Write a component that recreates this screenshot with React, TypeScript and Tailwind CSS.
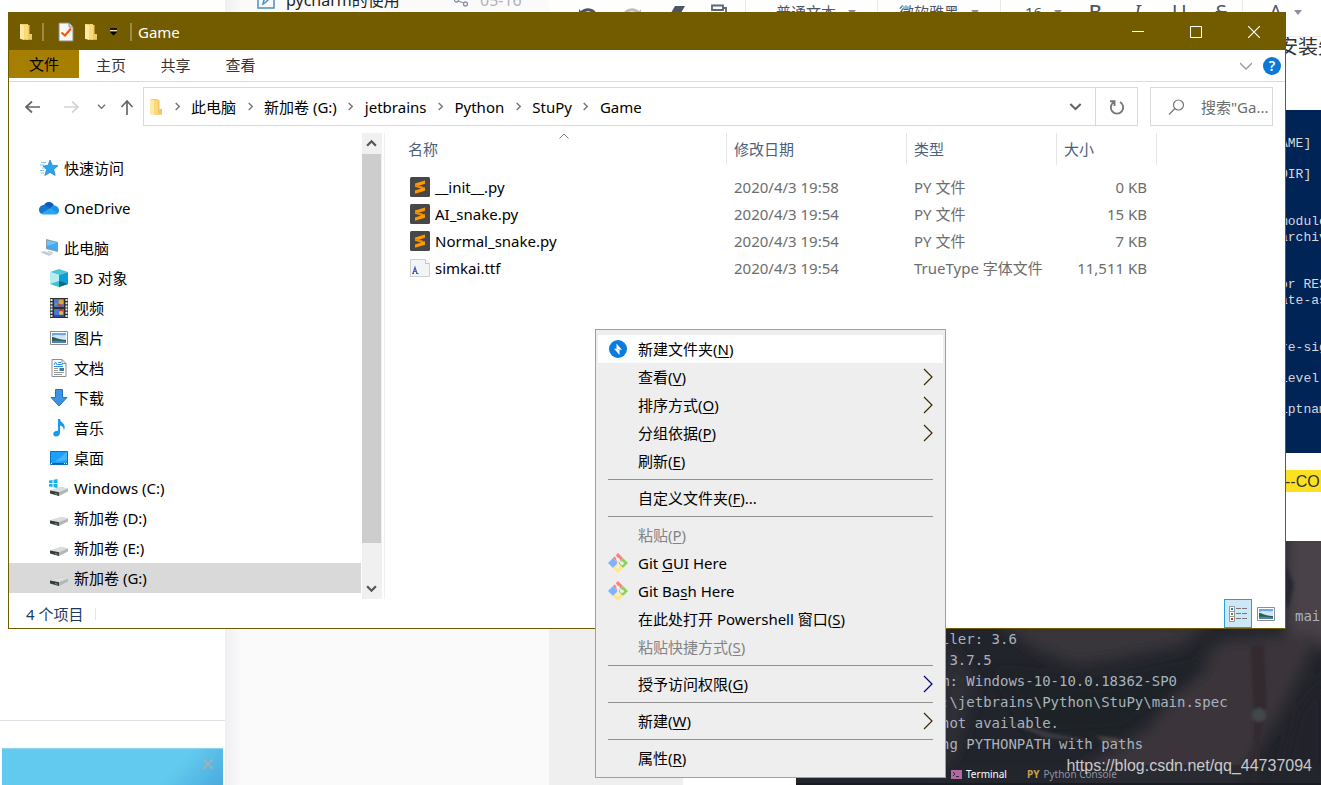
import type { ReactNode } from "react";
import { useState } from "react";

const uiFont = "font-['Noto_Sans','Noto_Sans_CJK_SC',sans-serif]";

/* ---------- icons ---------- */

function FolderIcon() {
  return (
    <svg width="14" height="18" viewBox="0 0 14 18">
      <path d="M1 1h8v16l-8-1z" fill="#f5cd67" />
      <path d="M1 1l4 1.500v14.500l-4-1.500z" fill="#ffe9a6" />
      <path d="M5 2.500l4-1v10h4v5H5z" fill="#fbd978" />
      <path d="M9 2h1.500v9H13v5.500H9z" fill="#f0c765" />
    </svg>
  );
}

function DocCheckIcon() {
  return (
    <svg width="16" height="20" viewBox="0 0 16 20">
      <path d="M1 1h10l4 4v14H1z" fill="#f7f7f7" stroke="#8c8c8c" />
      <path d="M11 1v4h4" fill="#ddd" stroke="#8c8c8c" />
      <path d="M3.500 10.500l3.500 3 6-7" fill="none" stroke="#e8590c" strokeWidth="2" />
    </svg>
  );
}

function Chevron({ dir = "right", size = 9, color = "#777", width = 1.6 }: { dir?: string; size?: number; color?: string; width?: number }) {
  const d = dir === "right" ? "M3 1l4 4-4 4" : dir === "down" ? "M1 3l4 4 4-4" : "M1 7l4-4 4 4";
  return (
    <svg width={size} height={size} viewBox="0 0 10 10" fill="none" stroke={color} strokeWidth={width}>
      <path d={d} />
    </svg>
  );
}

function ArrowIcon({ dir, color }: { dir: "left" | "right" | "up"; color: string }) {
  const d = {
    left: "M16 9H2M8 3.500L2 9l6 5.500",
    right: "M2 9h14M10 3.500l6 5.500-6 5.500",
    up: "M9 17V3M3.500 9l5.500-6 5.500 6",
  }[dir];
  return (
    <svg width="18" height="18" viewBox="0 0 18 18" fill="none" stroke={color} strokeWidth="1.700">
      <path d={d} />
    </svg>
  );
}

function StarIcon() {
  return (
    <svg width="20" height="18" viewBox="0 0 20 18">
      <path d="M11 1l2.300 5.200 5.700.5-4.300 3.700 1.500 6-5.200-3-5.200 3.100 1.800-6L4 7l5-.6z" fill="#2ea3ee" stroke="#1b7cc4" strokeWidth=".7" />
      <path d="M2 3.500h5M1 6h4M3 9h3M1 11.500h4M2 14h3" stroke="#7cc4f3" strokeWidth="1" />
    </svg>
  );
}

function CloudIcon() {
  return (
    <svg width="20" height="14" viewBox="0 0 20 14">
      <path d="M5 4a5.500 5.500 0 0 1 10 .5l-4 3L4 6z" fill="#0d5cb8" />
      <path d="M4.500 4C1.800 4.200 0 6.300 0 8.800 0 11 1 12 2.500 13L12 8 6.500 4.300z" fill="#1277d3" />
      <path d="M14.500 4.500c3 0 5.500 2 5.500 5 0 1.300-.5 2.500-1.500 3.200L10.500 7.500z" fill="#1a93e4" />
      <path d="M2 12.600C3 13.500 4 13.500 5 13.500h11c1.300 0 2.300-.3 3-1.200L10.700 7.500z" fill="#2aa7ea" />
    </svg>
  );
}

function ComputerIcon() {
  return (
    <svg width="20" height="18" viewBox="0 0 20 18">
      <path d="M7 0l12 3v10L7 10z" fill="#8b9aa8" />
      <path d="M8 1.300l10.200 2.500v8L8 9.200z" fill="#3fa9f5" />
      <path d="M8 1.300l10.200 2.500L8 7z" fill="#72c3fa" />
      <path d="M9 12l5 1v1.500L9 13zM1 13l4-1 9 3-4 2z" fill="#c9cdd2" />
    </svg>
  );
}

function CubeIcon() {
  return (
    <svg width="18" height="18" viewBox="0 0 18 18">
      <path d="M0 3l9-3 9 3-9 3z" fill="#4cc6d6" />
      <path d="M0 3l9 3v12l-9-3z" fill="#b5edf0" />
      <path d="M18 3L9 6v12l9-3z" fill="#0c9fd6" />
      <path d="M0 15l9-3v6z" fill="#3cc3d3" />
      <path d="M9 12l9 3-9 3z" fill="#066a86" />
    </svg>
  );
}

function FilmIcon() {
  return (
    <svg width="18" height="20" viewBox="0 0 18 20">
      <path d="M0 0h18v20H0z" fill="#2e2e2e" />
      <path d="M1.500 1v18M16.500 1v18" stroke="#e8e8e8" strokeWidth="2" strokeDasharray="2 1.200" />
      <path d="M4 1h10v8H4zM4 11h10v8H4z" fill="#4d78d0" />
      <circle cx="11" cy="4" r="2.500" fill="#e5a42e" />
      <circle cx="6" cy="6" r="1.200" fill="#5ab43c" />
      <path d="M8 6l5 1-2 2-3-1z" fill="#cf3b26" />
      <circle cx="11" cy="15" r="2" fill="#e2c03b" />
      <path d="M9 11h4v2H9z" fill="#cf3b26" />
      <path d="M4 17h10v2H4z" fill="#2b4da3" />
    </svg>
  );
}

function PictureIcon() {
  return (
    <svg width="18" height="14" viewBox="0 0 18 14">
      <path d="M.5.5h17v13H.5z" fill="#fff" stroke="#8f8f8f" />
      <path d="M2 2h14v10H2z" fill="#69a9e8" />
      <path d="M2 5c4-2 7 0 14-1v5H2z" fill="#cfe5f8" />
      <path d="M2 6c3 0 5 2.500 14 3v3H2z" fill="#2f5f52" />
      <path d="M2 10c5-.5 9 0 14 .5V12H2z" fill="#4a86b8" />
    </svg>
  );
}

function DocumentIcon() {
  return (
    <svg width="16" height="18" viewBox="0 0 16 18">
      <path d="M1 .5h10l4 4v13H1z" fill="#fff" stroke="#8c8c8c" />
      <path d="M11 .5v4h4" fill="none" stroke="#8c8c8c" />
      <path d="M7 3.500h3M6.500 5.500h5M3 7.500h9" stroke="#2f8fd8" />
      <path d="M3 6l1.500-3L6 6" stroke="#2f8fd8" fill="none" />
      <path d="M3 9.500h4M3 11.500h4M3 13.500h10M3 15.500h8" stroke="#9a9a9a" />
      <path d="M8.500 9h4.500v3H8.500z" fill="#3f7aa5" />
    </svg>
  );
}

function DownloadIcon() {
  return (
    <svg width="18" height="18" viewBox="0 0 18 18">
      <path d="M5.500.5h7v8h4.500L9 17 1 8.500h4.500z" fill="#3b93e3" stroke="#2872bb" />
    </svg>
  );
}

function MusicIcon() {
  return (
    <svg width="12" height="18" viewBox="0 0 12 18">
      <path d="M5 0h2c.3 3.500 4.700 4 4.700 8 0 1.300-.3 2.200-1 3.200.3-3-1.500-4.200-3.700-4.700V14c0 2-1.600 3.400-3.900 3.400S.3 16.300.3 14.700s1.600-3 3.700-3c.4 0 .7 0 1 .2z" fill="#149af0" />
    </svg>
  );
}

function DesktopIcon() {
  return (
    <svg width="18" height="14" viewBox="0 0 18 14">
      <path d="M.5.500h17v13H.5z" fill="#1ba1fb" stroke="#0d6fb8" />
      <path d="M17 1v8L5 11z" fill="#46b5ff" />
      <path d="M1 12h16v1H1z" fill="#0b5f9f" />
      <path d="M1 12.500h1M14 12.500h1M16 12.500h1" stroke="#fff" />
    </svg>
  );
}

function DriveIcon({ system }: { system?: boolean }) {
  return (
    <svg width="20" height="18" viewBox="0 0 20 18">
      <path d="M1 11.500l11-3.500 7 1.500v3l-9 4.500-9-3z" fill="#b4b6b8" />
      <path d="M1 11.500l11-3.500 7 1.500-9 3.800z" fill="#dcdddf" />
      <path d="M1 11.500l9 1.800V17l-9-2.500z" fill="#3b3b3b" />
      <path d="M6 14l2.500.700v1L6 15z" fill="#2fd14b" />
      {system && <path d="M0 1.500l3.500-.6v3H0zM4.500.7L8.500 0v4h-4zM0 5h3.500v3L0 7.500zM4.500 5h4v4l-4-.7z" fill="#14b4ef" />}
    </svg>
  );
}

function SublimeIcon() {
  return (
    <svg width="20" height="20" viewBox="0 0 20 20">
      <rect width="20" height="20" rx="1.500" fill="#474747" />
      <path d="M15 3.500v3.200L8.800 8.700 15 10.500v3.300l-10 3v-3.200l6.200-2L5 9.800V6.500z" fill="#ff9800" />
      <path d="M5 8.500l10 3v-1L8.800 8.700 5 7.500z" fill="#d97e00" />
    </svg>
  );
}

function FontFileIcon() {
  return (
    <svg width="20" height="18" viewBox="0 0 20 18">
      <path d="M.5.500h15l4 4v13H.5z" fill="#f3f4f6" stroke="#cfcfcf" />
      <path d="M15.500.500v4h4" fill="#fff" stroke="#c4c4c4" />
      <path d="M3 14.500l2-6 2 6M3.500 12.500h3" fill="none" stroke="#3a5fc0" strokeWidth="1.200" />
      <path d="M2 14.500h2M6 14.500h2.500" stroke="#3a5fc0" />
    </svg>
  );
}

function GitIcon() {
  return (
    <svg width="20" height="20" viewBox="0 0 20 20">
      <path d="M10 0l5 5-5 5-5-5z" fill="#ff7f7f" />
      <path d="M5 5l5 5-5 5-5-5z" fill="#7fb2ff" />
      <path d="M15 5l5 5-5 5-5-5z" fill="#8bd45c" />
      <path d="M10 10l5 5-5 5-5-5z" fill="#ffe680" />
      <path d="M7 2.500l3 4v8M10 6.500l4 4" stroke="#eee" strokeWidth="1.600" fill="none" />
      <circle cx="10" cy="6.500" r="1.800" fill="#eee" />
      <circle cx="14" cy="10.300" r="1.800" fill="#eee" />
      <circle cx="10" cy="14" r="1.800" fill="#eee" />
    </svg>
  );
}

function BoltIcon() {
  return (
    <svg width="18" height="18" viewBox="0 0 18 18">
      <circle cx="9" cy="9" r="9" fill="#0a7be0" />
      <path d="M7.500 3.500v5.500l5.500 1z" fill="#fff" />
      <path d="M10.500 15V9.500L5 8.500z" fill="#fff" />
    </svg>
  );
}

/* ---------- data ---------- */

const crumbs = ["此电脑", "新加卷 (G:)", "jetbrains", "Python", "StuPy", "Game"];

const places = [
  { label: "3D 对象", icon: <CubeIcon /> },
  { label: "视频", icon: <FilmIcon /> },
  { label: "图片", icon: <PictureIcon /> },
  { label: "文档", icon: <DocumentIcon /> },
  { label: "下载", icon: <DownloadIcon /> },
  { label: "音乐", icon: <MusicIcon /> },
  { label: "桌面", icon: <DesktopIcon /> },
  { label: "Windows (C:)", icon: <DriveIcon system /> },
  { label: "新加卷 (D:)", icon: <DriveIcon /> },
  { label: "新加卷 (E:)", icon: <DriveIcon /> },
  { label: "新加卷 (G:)", icon: <DriveIcon /> },
];

const files = [
  { name: "__init__.py", date: "2020/4/3 19:58", type: "PY 文件", size: "0 KB" },
  { name: "AI_snake.py", date: "2020/4/3 19:54", type: "PY 文件", size: "15 KB" },
  { name: "Normal_snake.py", date: "2020/4/3 19:54", type: "PY 文件", size: "7 KB" },
  { name: "simkai.ttf", date: "2020/4/3 19:54", type: "TrueType 字体文件", size: "11,511 KB" },
];

type MenuEntry = {
  before: string;
  key: string;
  after: string;
  icon?: ReactNode;
  arrow?: string;
  disabled?: boolean;
  active?: boolean;
};

const menuGroups: MenuEntry[][] = [
  [
    { before: "新建文件夹(", key: "N", after: ")", icon: <BoltIcon />, active: true },
    { before: "查看(", key: "V", after: ")", arrow: "#3a2a00" },
    { before: "排序方式(", key: "O", after: ")", arrow: "#3a2a00" },
    { before: "分组依据(", key: "P", after: ")", arrow: "#3a2a00" },
    { before: "刷新(", key: "E", after: ")" },
  ],
  [{ before: "自定义文件夹(", key: "F", after: ")..." }],
  [
    { before: "粘贴(", key: "P", after: ")", disabled: true },
    { before: "Git ", key: "G", after: "UI Here", icon: <GitIcon /> },
    { before: "Git Ba", key: "s", after: "h Here", icon: <GitIcon /> },
    { before: "在此处打开 Powershell 窗口(", key: "S", after: ")" },
    { before: "粘贴快捷方式(", key: "S", after: ")", disabled: true },
  ],
  [{ before: "授予访问权限(", key: "G", after: ")", arrow: "#00007a" }],
  [{ before: "新建(", key: "W", after: ")", arrow: "#3a2a00" }],
  [{ before: "属性(", key: "R", after: ")" }],
];

/* ---------- the note editor behind the window ---------- */

function Caret() {
  return <span className="ml-3 border-x-4 border-t-[5px] border-x-transparent border-t-[#8a909c]" />;
}

function EditorToolbar() {
  return (
    <div className="flex h-[37px] shrink-0 items-start overflow-hidden border-b border-[#eee] bg-white text-[15px] text-[#4d5568]">
      <div className="flex h-6 items-center gap-6 pl-[29px] pr-[17px] pt-2">
        <svg width="20" height="20" viewBox="0 0 20 20" fill="none" stroke="#4d5568" strokeWidth="3">
          <path d="M3 7c5-5 13-4 15 3" />
          <path d="M1 3v8h7z" fill="#4d5568" stroke="none" />
        </svg>
        <svg width="20" height="20" viewBox="0 0 20 20" fill="none" stroke="#bcbcbc" strokeWidth="3">
          <path d="M17 7C12 2 4 3 2 10" />
          <path d="M19 3v8h-7z" fill="#bcbcbc" stroke="none" />
        </svg>
        <svg width="20" height="20" viewBox="0 0 20 20">
          <path d="M9 0h10l-7 12H2z" fill="#4d5568" />
        </svg>
        <svg width="18" height="24" viewBox="0 0 18 24" fill="none" stroke="#5d6577" strokeWidth="1.800">
          <path d="M2 1.500h11v4.500H2zM13 4h3v5H9.500v8" />
        </svg>
      </div>
      <div className="flex h-6 items-center border-l border-[#e8e8e8] pl-[30px] pr-[21px]">
        普通文本
        <Caret />
      </div>
      <div className="flex h-6 items-center border-l border-[#e8e8e8] px-[21px]">
        微软雅黑
        <Caret />
      </div>
      <div className="flex h-6 items-center border-l border-[#e8e8e8] pl-6 pr-3">
        16
        <Caret />
      </div>
      <div className="flex h-6 items-center text-xl">
        <b className="w-[42px] text-center font-medium">B</b>
        <i className="w-[42px] text-center">I</i>
        <u className="w-[42px] text-center">U</u>
        <s className="w-[42px] text-center">S</s>
      </div>
      <div className="flex h-6 items-center border-l border-[#e8e8e8] pl-[26px] text-xl">
        A
        <Caret />
      </div>
    </div>
  );
}

function PowershellShot() {
  const blocks = [["AME]"], ["DIR]"], ["modules", "archive"], ["or RES", "ate-as"], ["re-sig"], ["level"], ["iptname"]];
  return (
    <div className="mt-[53px] h-[343px] shrink-0 bg-[#012456] pl-[484px] pt-[11px] font-['Liberation_Mono',monospace] text-[13px] leading-4 text-[#d5d8de]">
      {blocks.map((lines, i) => (
        <pre key={i} className={`font-[inherit] ${i === 2 || i === 3 || i === 4 ? "pt-[31px]" : "pt-[15px]"}`}>
          {lines.join("\n")}
        </pre>
      ))}
    </div>
  );
}

function TerminalShot() {
  const lines = [
    "ller: 3.6",
    " 3.7.5",
    "m: Windows-10-10.0.18362-SP0",
    ":\\jetbrains\\Python\\StuPy\\main.spec",
    "not available.",
    "ng PYTHONPATH with paths",
  ];
  return (
    <div className="relative mt-[49px] flex min-h-0 flex-1 flex-col overflow-hidden bg-[#22242b] font-['DejaVu_Sans_Mono',monospace] text-sm text-[#a9b2bd]">
      <svg className="absolute inset-0 h-full w-full" viewBox="0 0 525 244" preserveAspectRatio="none">
        <defs>
          <filter id="soft" x="-20%" y="-20%" width="140%" height="140%">
            <feGaussianBlur stdDeviation="7" />
          </filter>
          <filter id="crisp" x="-20%" y="-20%" width="140%" height="140%">
            <feGaussianBlur stdDeviation="1.500" />
          </filter>
        </defs>
        <g filter="url(#soft)">
          <path d="M490-10h50v120l-50-20z" fill="#4a4348" />
          <path d="M200 80h215l-30 25-70 14-35 5-40-16z" fill="#39343a" />
          <path d="M425 100l100-10-40 80-50 80H250l100-60z" fill="#3b363b" />
          <path d="M150 100l30 40-15 60-25 50z" fill="#2e2f36" />
          <path d="M500 170l30-40v120h-50z" fill="#22242c" />
          <path d="M200 130l110 12 110-20-90 70-90 5z" fill="#1e2127" />
        </g>
        <g filter="url(#crisp)">
          <path d="M454 104h14l3 56-8 50-2 44h-6l3-74z" fill="#30292f" />
          <circle cx="463" cy="174" r="7" fill="#43474a" />
          <path d="M205 178l50 14 40 8-45-3z" fill="#3a3b41" />
          <path d="M300 195l20 2 12 6-24-2z" fill="#4c423e" />
          <path d="M490 24l8 20-6 24-5-10z" fill="#252830" />
        </g>
      </svg>
      <div className="h-[41px] shrink-0 border-b border-[#1f242d]" />
      <div className="relative flex-1 pl-[145px] pt-6 leading-[21px]">
        <pre className="pl-[354px] font-[inherit]">main</pre>
        <pre className="pt-0.5 font-[inherit]">{lines.join("\n")}</pre>
      </div>
      <div className={`relative flex h-5 shrink-0 items-center whitespace-nowrap border-b-2 border-[#191b22] bg-[#24262d]/70 pl-[155px] text-[10px] ${uiFont}`}>
        <svg width="11" height="9" viewBox="0 0 11 9">
          <path d="M0 0h11v9H0z" fill="#b06aa0" />
          <path d="M2 2l2 2-2 2M5 6.500h3" stroke="#3b2737" fill="none" />
        </svg>
        <span className="ml-1 text-white">Terminal</span>
        <b className="ml-5 text-[#c9a048]">PY</b>
        <span className="ml-1 text-[#8d95a1]">Python Console</span>
      </div>
    </div>
  );
}

function EditorBackdrop() {
  return (
    <div className="flex h-full">
      <div className="flex w-[225px] shrink-0 flex-col justify-end bg-white">
        <div className="border-t border-[#dfe1e6] px-[2px] pt-[27px]">
          <div className="flex h-[37px] justify-end border-t border-[#8fd3ee] bg-linear-[135deg] from-[#62caee] from-75% to-[#4aa9de] pr-[10px] pt-[10px]">
            <svg width="10" height="10" viewBox="0 0 10 10" stroke="#9fb0b8" strokeWidth="2">
              <path d="M0 0l10 10M10 0L0 10" />
            </svg>
          </div>
        </div>
      </div>
      <div className="w-[324px] shrink-0 overflow-hidden bg-linear-to-r from-[#eeeff2] to-[#fafafa] to-[16px]">
        <div className="-mt-3 flex h-6 items-center pl-8 text-base">
          <svg width="18" height="18" viewBox="0 0 18 18" fill="none" stroke="#4a90c8" strokeWidth="1.500">
            <path d="M1 1h16v16H1z" />
            <path d="M6 13l1-4 5-5 2 2-5 5z" />
          </svg>
          <span className="ml-[11px] w-[168px] text-[#222]">pycharm的使用</span>
          <svg width="14" height="14" viewBox="0 0 14 14" fill="none" stroke="#8b93a7" strokeWidth="1.300">
            <circle cx="2.500" cy="7" r="2" />
            <circle cx="11.500" cy="11" r="2" />
            <circle cx="11.500" cy="3" r="2" />
            <path d="M4 8l6 2M4 6l6-2" />
          </svg>
          <span className="ml-3 text-[#b0b3ba]">05-16</span>
        </div>
      </div>
      <div className="flex min-w-0 flex-1 flex-col">
        <EditorToolbar />
        <div className="flex min-h-0 flex-1">
          <div className="w-[134px] shrink-0 bg-[#efefef]" />
          <div className="flex min-w-0 flex-1 flex-col overflow-hidden whitespace-nowrap bg-white pl-[113px]">
            <p className="pl-[482px] text-xl leading-5 text-[#333]">安装失败</p>
            <PowershellShot />
            <p className="mt-[17px] h-[22px] shrink-0 bg-[#fbe122] pl-[489px] font-['Liberation_Sans',sans-serif] text-base leading-6 text-[#333]">--CO</p>
            <TerminalShot />
          </div>
        </div>
      </div>
    </div>
  );
}

/* ---------- explorer window ---------- */

function TitleBar() {
  return (
    <header className="flex h-[37px] shrink-0 items-center bg-[#735c00] pl-[10px] text-white">
      <FolderIcon />
      <span className="ml-[9px] h-[18px] w-[2px] bg-[#9b8a4a]" />
      <span className="ml-[14px]"><DocCheckIcon /></span>
      <span className="ml-[10px]"><FolderIcon /></span>
      <button aria-label="自定义快速访问工具栏" className="ml-[11px]">
        <svg width="9" height="8" viewBox="0 0 9 8">
          <path d="M1 1h7" stroke="#000" strokeWidth="1.500" />
          <path d="M1 2.500h7" stroke="#e8e0c0" />
          <path d="M1 4h7L4.500 7.500z" fill="#000" />
        </svg>
      </button>
      <span className="ml-3 h-[18px] w-[2px] bg-[#9b8a4a]" />
      <h1 className="ml-[6px] flex-1">Game</h1>
      <button aria-label="最小化" className="flex h-full w-[58px] items-center justify-center">
        <svg width="12" height="12" viewBox="0 0 12 12" stroke="#fff"><path d="M0 5.500h12" /></svg>
      </button>
      <button aria-label="最大化" className="flex h-full w-[58px] items-center justify-center">
        <svg width="12" height="12" viewBox="0 0 12 12" fill="none" stroke="#fff"><path d="M.5.500h11v11H.5z" /></svg>
      </button>
      <button aria-label="关闭" className="mr-0.5 flex h-full w-[58px] items-center justify-center">
        <svg width="12" height="12" viewBox="0 0 12 12" stroke="#fff" strokeWidth="1.200"><path d="M0 0l12 12M12 0L0 12" /></svg>
      </button>
    </header>
  );
}

function RibbonTabs() {
  return (
    <nav className="flex h-8 shrink-0 border-b border-[#dadbdc] text-[#333]">
      <button className="h-7 w-[70px] bg-[#a67f00] text-black">文件</button>
      <button className="h-[30px] w-16">主页</button>
      <button className="h-[30px] w-[65px]">共享</button>
      <button className="h-[30px] w-[65px]">查看</button>
      <div className="ml-auto flex items-center gap-[11px] pr-1">
        <button aria-label="展开功能区">
          <svg width="12" height="8" viewBox="0 0 12 8" fill="none" stroke="#999" strokeWidth="1.300"><path d="M0 1l6 6 6-6" /></svg>
        </button>
        <button aria-label="帮助" className="h-[18px] w-[18px] rounded-full bg-[#0a78d7] text-sm font-semibold leading-[18px] text-white">?</button>
      </div>
    </nav>
  );
}

function AddressRow() {
  const [query, setQuery] = useState("");

  return (
    <div className="flex shrink-0 pb-[7px] pr-3 pt-[5px]">
      <div className="flex w-[134px] items-center pl-[15px]">
        <button aria-label="返回"><ArrowIcon dir="left" color="#666" /></button>
        <button aria-label="前进" className="ml-5"><ArrowIcon dir="right" color="#d4d4d4" /></button>
        <button aria-label="最近浏览的位置" className="ml-[17px]"><Chevron dir="down" color="#777" /></button>
        <button aria-label="上移" className="ml-3"><ArrowIcon dir="up" color="#666" /></button>
      </div>
      <div className="flex h-[39px] flex-1 items-center border border-[#d9d9d9]">
        <span className="ml-[5px]"><FolderIcon /></span>
        {crumbs.map((crumb) => (
          <span key={crumb} className="flex items-center">
            <span className="flex w-7 justify-center"><Chevron /></span>
            <button>{crumb}</button>
          </span>
        ))}
        <button aria-label="以前的位置" className="ml-auto mr-[13px]"><Chevron dir="down" size={13} color="#666" /></button>
        <button aria-label="刷新" className="flex h-full w-[42px] items-center justify-center border-l border-[#d9d9d9]">
          <svg width="16" height="16" viewBox="0 0 16 16" fill="none" stroke="#777" strokeWidth="1.900">
            <path d="M11 3a6.200 6.200 0 1 1-6 0M1 2.200h4.500V7" />
          </svg>
        </button>
      </div>
      <label className="ml-3 flex h-[39px] w-[123px] items-center border border-[#d9d9d9] pl-[17px]">
        <svg className="shrink-0" width="17" height="16" viewBox="0 0 17 16" fill="none" stroke="#777" strokeWidth="1.200">
          <circle cx="10.500" cy="6" r="5" />
          <path d="M7 9.500L1 15.500" />
        </svg>
        <input
          aria-label="搜索"
          className="ml-4 w-[71px] min-w-0 outline-none placeholder:text-[#6d6d6d]"
          placeholder={'搜索"Ga...'}
          value={query}
          onChange={(e) => setQuery(e.target.value)}
        />
      </label>
    </div>
  );
}

function NavItem({ icon, label, nested, selected, onClick }: { icon: ReactNode; label: string; nested?: boolean; selected?: boolean; onClick?: () => void }) {
  return (
    <button
      onClick={onClick}
      className={`flex h-[30px] w-full shrink-0 items-center text-left ${nested ? "pl-10" : "pl-[30px]"} ${selected ? "bg-[#d9d9d9]" : ""}`}
    >
      <span className="flex w-5 justify-center">{icon}</span>
      <span className="ml-[5px]">{label}</span>
    </button>
  );
}

function NavPane() {
  const [selected, setSelected] = useState("新加卷 (G:)");

  return (
    <aside className="flex w-[376px] shrink-0 border-r border-[#f0f0f0]">
      <div className="flex flex-1 flex-col gap-[10px] pt-5">
        <NavItem icon={<StarIcon />} label="快速访问" />
        <NavItem icon={<CloudIcon />} label="OneDrive" />
        <div>
          <NavItem icon={<ComputerIcon />} label="此电脑" />
          {places.map((p) => (
            <NavItem key={p.label} icon={p.icon} label={p.label} nested selected={p.label === selected} onClick={() => setSelected(p.label)} />
          ))}
        </div>
      </div>
      <div className="ml-px mr-[2px] flex w-5 flex-col bg-[#f0f0f0] pr-px">
        <button aria-label="向上滚动" className="flex h-[21px] items-center justify-center"><Chevron dir="up" size={11} color="#555" width={2} /></button>
        <div className="flex-1 bg-[#cdcdcd]" />
        <button aria-label="向下滚动" className="flex h-14 items-end justify-center pb-[5px]"><Chevron dir="down" size={11} color="#555" width={2} /></button>
      </div>
    </aside>
  );
}

function FileTable() {
  const th = "h-8 border-r border-[#e5e5e5] pl-[7px] leading-8";
  return (
    <main className="flex-1">
      <table className="w-[772px] table-fixed text-left">
        <colgroup>
          <col className="w-[342px]" />
          <col className="w-[180px]" />
          <col className="w-[150px]" />
          <col className="w-[100px]" />
        </colgroup>
        <thead className="text-[#4c607a]">
          <tr className="h-10 align-top">
            <th className="p-0 font-normal">
              <div className="relative h-8 border-r border-[#e5e5e5] pl-[23px] leading-8">
                名称
                <svg className="absolute left-[174px] top-0" width="10" height="6" viewBox="0 0 10 6" fill="none" stroke="#777">
                  <path d="M.5 5.500l4.500-4.500 4.500 4.500" />
                </svg>
              </div>
            </th>
            <th className="p-0 font-normal"><div className={th}>修改日期</div></th>
            <th className="p-0 font-normal"><div className={th}>类型</div></th>
            <th className="p-0 font-normal"><div className={th}>大小</div></th>
          </tr>
        </thead>
        <tbody className="text-[#6d6d6d]">
          {files.map((file) => (
            <tr key={file.name} className="h-[27px] whitespace-nowrap">
              <td className="p-0 pl-[25px] text-black">
                <div className="flex items-center gap-[5px]">
                  {file.name.endsWith(".py") ? <SublimeIcon /> : <FontFileIcon />}
                  {file.name}
                </div>
              </td>
              <td className="p-0 pl-[7px]">{file.date}</td>
              <td className="p-0 pl-[7px]">{file.type}</td>
              <td className="p-0 pr-[10px] text-right">{file.size}</td>
            </tr>
          ))}
        </tbody>
      </table>
    </main>
  );
}

function StatusBar() {
  return (
    <footer className="flex h-[29px] shrink-0 items-center pl-[17px] text-[#1e3a5f]">
      <span>4 个项目</span>
      <span className="ml-3 h-3 w-px bg-[#e5e5e5]" />
      <button aria-label="详细信息" className="ml-auto flex h-full w-7 items-center justify-center border border-[#26a0da] bg-[#cce8f6]">
        <svg width="18" height="16" viewBox="0 0 18 16">
          <path d="M.5.500h5v5h-5zM.5 5.500h5v5h-5zM.5 10.500h5v5h-5z" fill="#fff" stroke="#999" />
          <path d="M2 2h2v2H2z" fill="#2878b8" />
          <path d="M2 7h2v2H2z" fill="#6b8b4a" />
          <path d="M2 12h2v2H2z" fill="#c0392b" />
          <path d="M7 2.500h5M13 2.500h5M7 7.500h5M13 7.500h5M7 12.500h5M13 12.500h5" stroke="#777" />
        </svg>
      </button>
      <button aria-label="大图标" className="ml-[5px] mr-[10px]"><PictureIcon /></button>
    </footer>
  );
}

function ContextMenu() {
  return (
    <div role="menu" className="absolute left-[595px] top-[329px] w-[351px] border border-[#a0a0a0] bg-[#eee] px-[2px] py-[5px]">
      {menuGroups.map((group, i) => (
        <div key={i}>
          {i > 0 && <hr className="mx-[10px] my-1 border-[#919191]" />}
          {group.map((item) => (
            <button
              key={item.before}
              role="menuitem"
              disabled={item.disabled}
              className={`flex h-7 w-full items-center px-[10px] ${item.active ? "bg-white" : ""} ${item.disabled ? "text-[#838383]" : "text-black"}`}
            >
              <span className="flex w-5 justify-center">{item.icon}</span>
              <span className="ml-[10px] whitespace-pre">
                {item.before}
                <span className="underline underline-offset-2">{item.key}</span>
                {item.after}
              </span>
              {item.arrow && (
                <svg className="ml-auto" width="10" height="18" viewBox="0 0 10 18" fill="none" stroke={item.arrow} strokeWidth="1.200">
                  <path d="M1 1l8 8-8 8" />
                </svg>
              )}
            </button>
          ))}
        </div>
      ))}
    </div>
  );
}

export default function App() {
  return (
    <div className={`relative h-screen overflow-hidden bg-white text-[15px] leading-5 ${uiFont}`}>
      <EditorBackdrop />
      <div className="absolute left-2 right-[35px] top-3 flex flex-col border border-[#735c00] bg-white">
        <TitleBar />
        <RibbonTabs />
        <AddressRow />
        <div className="flex h-[466px]">
          <NavPane />
          <FileTable />
        </div>
        <StatusBar />
      </div>
      <ContextMenu />
      <p className="absolute bottom-[9px] right-[9px] font-['Liberation_Sans',sans-serif] text-base leading-5 text-white/75">
        https://blog.csdn.net/qq_44737094
      </p>
    </div>
  );
}
